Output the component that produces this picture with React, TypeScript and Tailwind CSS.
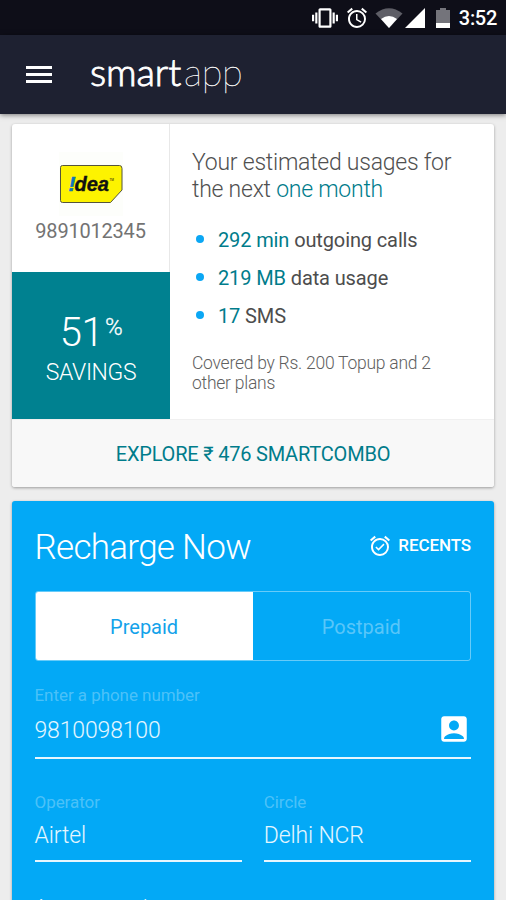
import React, { useState } from 'react';
import { MdAccountBox, MdAlarm, MdAlarmOn, MdVibration } from 'react-icons/md';

const usages = [
  { amount: '292 min', label: 'outgoing calls' },
  { amount: '219 MB', label: 'data usage' },
  { amount: '17', label: 'SMS' },
];

const StatusBar: React.FC = () => (
  <div className="flex h-[35px] shrink-0 items-center justify-end bg-[#0e0e18] pr-[9px] text-white">
    <MdVibration className="mr-[7px] h-[26px] w-[26px]" />
    <MdAlarm className="mr-[6px] h-6 w-6" />
    {/* Wifi */}
    <svg viewBox="0 0 28 20" className="mr-[2px] h-5 w-7">
      <path d="M0.5 5.5 Q14 -5 27.5 5.5 L14 20 Z" fill="#5e5e66" />
      <path d="M6 11 Q14 5 22 11 L14 20 Z" fill="#fff" />
    </svg>
    {/* Signal */}
    <svg viewBox="0 0 20 20" className="mr-[11px] h-5 w-5">
      <path d="M0 20 L20 0 V20 Z" fill="#fff" />
    </svg>
    {/* Battery */}
    <svg viewBox="0 0 14 20" className="mr-[9px] h-5 w-[14px]">
      <path d="M4 0 H10 V2 H14 V15 H0 V2 H4 Z" fill="#74747b" />
      <path d="M0 15 H14 V20 H0 Z" fill="#fff" />
    </svg>
    <span className="pt-px text-[20px] font-medium leading-none tracking-[-0.3px]">3:52</span>
  </div>
);

const Header: React.FC = () => (
  <header className="z-10 flex h-[79px] shrink-0 items-center bg-[#1e2131] pl-[26px] text-white shadow-[0_1px_5px_rgba(0,0,0,0.5)]">
    <button className="flex w-[26px] flex-col gap-1" aria-label="Menu">
      <span className="h-[3px] w-full bg-white" />
      <span className="h-[3px] w-full bg-white" />
      <span className="h-[3px] w-full bg-white" />
    </button>
    <h1 className="ml-[38px] flex pb-2 font-[Lato,sans-serif] text-[38px] leading-none">
      <span className="w-[94px] font-light tracking-[-0.1px] [-webkit-text-stroke:0.9px_white]">smart</span>
      <span className="font-thin tracking-[-0.3px] [-webkit-text-stroke:0.3px_white]">app</span>
    </h1>
  </header>
);

const IdeaLogo: React.FC = () => (
  <svg viewBox="0 0 64 64" className="h-16 w-16">
    <rect width="64" height="64" fill="#fdfefb" />
    <path
      d="M3.5 13.5 H60.5 Q63 13.5 63 16.5 V38 L51.5 50.5 H3.5 Q1.5 50.5 1.5 48.5 V15.5 Q1.5 13.5 3.5 13.5 Z"
      fill="#fdf300"
      stroke="#55553c"
    />
    <text x="9.5" y="39" fontFamily="Liberation Sans, sans-serif" fontSize="21" fontWeight="700" fontStyle="italic" fill="#0e75bb" stroke="#0e75bb" strokeWidth="0.6">
      !
    </text>
    <text x="15.5" y="39" fontFamily="Liberation Sans, sans-serif" fontSize="20" fontWeight="700" fontStyle="italic" fill="#111" stroke="#111" strokeWidth="0.4">
      dea
    </text>
    <text x="50.5" y="29" fontFamily="Roboto, sans-serif" fontSize="3" fill="#111">
      TM
    </text>
  </svg>
);

const UsageCard: React.FC = () => (
  <section className="overflow-hidden rounded-[3px] bg-white shadow-[0_1px_3px_rgba(0,0,0,0.35)]">
    <div className="flex h-[295px]">
      <div className="flex w-[158px] shrink-0 flex-col">
        <div className="flex h-[148px] flex-col items-center border-r border-[#e8e8e8] pt-7">
          <IdeaLogo />
          <p className="mt-[1px] text-[20px] leading-7 tracking-[-0.2px] text-[#737373]">9891012345</p>
        </div>
        <div className="flex h-[147px] flex-col items-center bg-[#008190] pt-10 font-light text-white">
          <p className="flex text-[40px] leading-[42px] tracking-[-0.5px]">
            51
            <span className="ml-[2px] pt-[2px] text-[24px] leading-[26px] [-webkit-text-stroke:0.3px_white]">%</span>
          </p>
          <p className="mt-[5px] text-[23px] leading-7 tracking-[-0.4px]">SAVINGS</p>
        </div>
      </div>
      <div className="flex-1 pl-[22px] pt-[25px]">
        <h2 className="text-[23px] font-light leading-[27px] tracking-[-0.24px] text-[#505050]">
          Your estimated usages for
          <br />
          the next <span className="text-[#007c8b]">one month</span>
        </h2>
        <ul className="mt-[18px]">
          {usages.map((usage) => (
            <li key={usage.label} className="flex h-[38px] items-center text-[20px] tracking-[-0.12px] text-[#4d4d4d]">
              <span className="mb-[2px] ml-[3.5px] mr-[14.5px] h-2 w-2 rounded-full bg-[#0ba7f4]" />
              <span>
                <span className="text-[#007c8b]">{usage.amount}</span> {usage.label}
              </span>
            </li>
          ))}
        </ul>
        <p className="mt-[18px] text-[17.5px] font-light leading-5 tracking-[-0.25px] text-[#606060]">
          Covered by Rs. 200 Topup and 2
          <br />
          other plans
        </p>
      </div>
    </div>
    <button className="flex h-[68px] w-full items-center justify-center border-t border-[#f0f0f0] bg-[#f8f8f8] text-[20px] tracking-[-0.2px] text-[#007c8b]">
      EXPLORE ₹ 476 SMARTCOMBO
    </button>
  </section>
);

interface FieldProps {
  label: string;
  value: string;
  icon?: React.ReactNode;
}

const Field: React.FC<FieldProps> = ({ label, value, icon }) => (
  <div className="flex-1 border-b-2 border-white/90">
    <p className="text-[17px] leading-5 tracking-[-0.05px] text-white/30">{label}</p>
    <div className="mt-[10px] flex h-[34px] items-start justify-between">
      <span className={`text-[23px] font-light leading-7 tracking-[-0.15px] text-white/90 ${icon ? 'pt-[2px]' : ''}`}>
        {value}
      </span>
      {icon}
    </div>
  </div>
);

const RechargeCard: React.FC = () => {
  const [plan, setPlan] = useState('Prepaid');

  return (
    <section className="mt-[14px] h-[460px] rounded-[3px] bg-[#03a9f6] pl-[22.5px] pr-[23px] pt-[26px] text-white shadow-[0_1px_3px_rgba(0,0,0,0.35)]">
      <div className="flex items-center justify-between">
        <h2 className="text-[35px] font-light leading-[42px] tracking-[-0.7px]">Recharge Now</h2>
        <button className="flex items-center gap-[6px] pb-1 text-[17px] font-medium tracking-[-0.1px]">
          <MdAlarmOn className="h-6 w-6" />
          RECENTS
        </button>
      </div>
      <div className="mt-[22px] flex h-[70px] overflow-hidden rounded-[3px] border border-white/40">
        {['Prepaid', 'Postpaid'].map((name) => (
          <button
            key={name}
            onClick={() => setPlan(name)}
            className={`flex-1 pt-px text-[20px] ${plan === name ? 'bg-white text-[#13a2ea]' : 'text-white/35'}`}
          >
            {name}
          </button>
        ))}
      </div>
      <div className="mt-6 flex h-[74px]">
        <Field
          label="Enter a phone number"
          value="9810098100"
          icon={<MdAccountBox className="-mt-[3px] h-[34px] w-[34px]" />}
        />
      </div>
      <div className="mt-[33px] flex h-[70px] gap-[22px]">
        <Field label="Operator" value="Airtel" />
        <Field label="Circle" value="Delhi NCR" />
      </div>
      <p className="mt-[31px] text-[21px] font-light leading-7 text-white/90">Amount and</p>
    </section>
  );
};

export default function App() {
  return (
    <div className="flex h-[900px] w-[506px] flex-col overflow-hidden bg-[#ededed] font-[Roboto,sans-serif]">
      <StatusBar />
      <Header />
      <main className="px-3 pt-[10px]">
        <UsageCard />
        <RechargeCard />
      </main>
    </div>
  );
}
